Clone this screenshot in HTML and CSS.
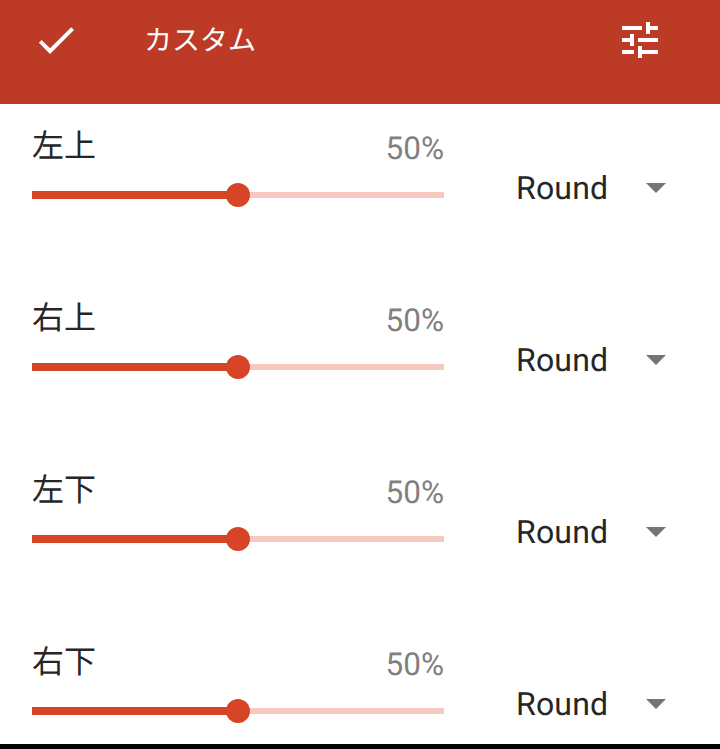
FILE: index.html
```html
<!DOCTYPE html>
<html lang="ja">
<head>
    <meta charset="UTF-8">
    <meta name="viewport" content="width=device-width, initial-scale=1.0">
    <title>カスタム</title>
    <link rel="stylesheet" href="styles.css">
</head>
<body>
    <div class="screen">
        <header class="toolbar">
            <svg class="icon" viewBox="0 0 24 24"><path d="M9 16.17L4.83 12l-1.41 1.41L9 19 21 7l-1.41-1.41z"/></svg>
            <h1 class="title">カスタム</h1>
            <svg class="icon" viewBox="0 0 24 24"><path d="M3 17v2h6v-2H3zM3 5v2h10V5H3zm10 16v-2h8v-2h-8v-2h-2v6h2zM7 9v2H3v2h4v2h2V9H7zm14 4v-2H11v2h10zm-6-4h2V7h4V5h-4V3h-2v6z"/></svg>
        </header>

        <div class="corner">
            <div class="corner-main">
                <div class="corner-head"><span class="label">左上</span><span class="value">50%</span></div>
                <div class="slider"><div class="fill"></div><div class="rest"></div><div class="thumb"></div></div>
            </div>
            <div class="dropdown"><span>Round</span><i class="arrow"></i></div>
        </div>

        <div class="corner">
            <div class="corner-main">
                <div class="corner-head"><span class="label">右上</span><span class="value">50%</span></div>
                <div class="slider"><div class="fill"></div><div class="rest"></div><div class="thumb"></div></div>
            </div>
            <div class="dropdown"><span>Round</span><i class="arrow"></i></div>
        </div>

        <div class="corner">
            <div class="corner-main">
                <div class="corner-head"><span class="label">左下</span><span class="value">50%</span></div>
                <div class="slider"><div class="fill"></div><div class="rest"></div><div class="thumb"></div></div>
            </div>
            <div class="dropdown"><span>Round</span><i class="arrow"></i></div>
        </div>

        <div class="corner">
            <div class="corner-main">
                <div class="corner-head"><span class="label">右下</span><span class="value">50%</span></div>
                <div class="slider"><div class="fill"></div><div class="rest"></div><div class="thumb"></div></div>
            </div>
            <div class="dropdown"><span>Round</span><i class="arrow"></i></div>
        </div>
    </div>
</body>
</html>
```

FILE: styles.css
```css
html, body {
    height: 100%;
    overflow: hidden;
}
body {
    margin: 0;
    background: #000;
    font-family: Roboto, "Noto Sans CJK JP", sans-serif;
    color: #262626;
    text-rendering: geometricPrecision;
}
.screen {
    height: 744px;
    overflow: hidden;
    background: #fff;
}
.toolbar {
    display: flex;
    align-items: flex-start;
    height: 104px;
    padding: 16px 56px 0 32px;
    box-sizing: border-box;
    background: #bc3a26;
    color: #fff;
}
.icon {
    width: 48px;
    height: 48px;
    flex: none;
    fill: #fff;
}
.title {
    flex: 1;
    margin: 0 0 0 64px;
    font-family: "Noto Sans CJK JP", sans-serif;
    font-size: 28px;
    font-weight: 400;
    line-height: 46px;
}
.corner {
    display: flex;
    align-items: flex-start;
    height: 172px;
    padding: 22px 0 0 32px;
    box-sizing: border-box;
}
.corner-main {
    width: 412px;
}
.corner-head {
    display: flex;
    justify-content: space-between;
    height: 40px;
}
.label {
    font-family: "Noto Sans CJK JP", sans-serif;
    font-size: 32px;
    line-height: 36px;
}
.value {
    font-size: 31.5px;
    line-height: 46px;
    color: #808080;
}
.slider {
    position: relative;
    display: flex;
    align-items: center;
    height: 24px;
    margin-top: 17px;
}
.fill {
    flex: 1;
    height: 8px;
    background: #d64525;
}
.rest {
    flex: 1;
    height: 6px;
    background: #f6c8bf;
}
.thumb {
    position: absolute;
    left: 194px;
    top: 0;
    width: 24px;
    height: 24px;
    border-radius: 50%;
    background: #d64525;
}
.dropdown {
    display: flex;
    align-items: center;
    margin: 42px 0 0 72px;
    font-size: 32px;
    line-height: 40px;
    letter-spacing: 0.2px;
}
.arrow {
    width: 0;
    height: 0;
    margin-left: 38px;
    border-left: 10px solid transparent;
    border-right: 10px solid transparent;
    border-top: 10px solid #757575;
}
```
